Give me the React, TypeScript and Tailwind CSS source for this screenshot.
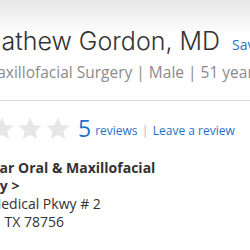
import React from 'react';

const Star = () => (
  <svg viewBox="0 0 24 24" className="w-[26px] h-[25px] shrink-0" fill="#e6e6e6">
    <path d="M12 1.5l3.2 7.1 7.7.7-5.8 5.1 1.8 7.6L12 18l-6.9 4 1.8-7.6-5.8-5.1 7.7-.7z" />
  </svg>
);

const App = () => {
  return (
    <div className="w-[250px] h-[250px] overflow-hidden bg-gradient-to-b from-[#e6e6e6] via-white via-[14%] to-white font-['Open_Sans',sans-serif]">
      <div className="h-[100px] pt-[26px] whitespace-nowrap">
        <div className="flex items-baseline h-[30px] ml-[-21px]">
          <h1 className="text-[25px] leading-[30px] text-[#333] font-['Inter',sans-serif] font-light">Mathew Gordon, MD</h1>
          <span className="ml-[12px] text-[14px] text-[#1f72c7]">Save</span>
        </div>
        <p className="ml-[-67px] mt-[6px] h-[20px] text-[15.5px] leading-[20px] text-[#8a8a8a]">Oral &amp; Maxillofacial Surgery | Male | 51 years</p>
      </div>

      <div className="h-px bg-[#d8d8d8]" />

      <div className="flex items-center h-[26px] mt-[14px] ml-[-11px] whitespace-nowrap">
        <div className="flex gap-[2px]">
          <Star />
          <Star />
          <Star />
        </div>
        <span className="ml-[7px] text-[23px] leading-none text-[#1f72c7]">5</span>
        <span className="ml-[4px] mt-[5px] text-[12px] text-[#1f72c7]">reviews</span>
        <span className="mx-[4px] mt-[5px] text-[13px] text-[#bbb]">|</span>
        <span className="mt-[5px] text-[12px] text-[#1f72c7]">Leave a review</span>
      </div>

      <div className="mt-[18px] whitespace-nowrap text-[14px] leading-[18px] text-[#333]">
        <p className="ml-[-31px] font-bold">Stellar Oral &amp; Maxillofacial</p>
        <p className="ml-[-46px] font-bold">Surgery &gt;</p>
        <p className="ml-[-47px]">3705 Medical Pkwy # 2</p>
        <p className="ml-[-44px]">Austin, TX 78756</p>
      </div>
    </div>
  );
};

export default App;
